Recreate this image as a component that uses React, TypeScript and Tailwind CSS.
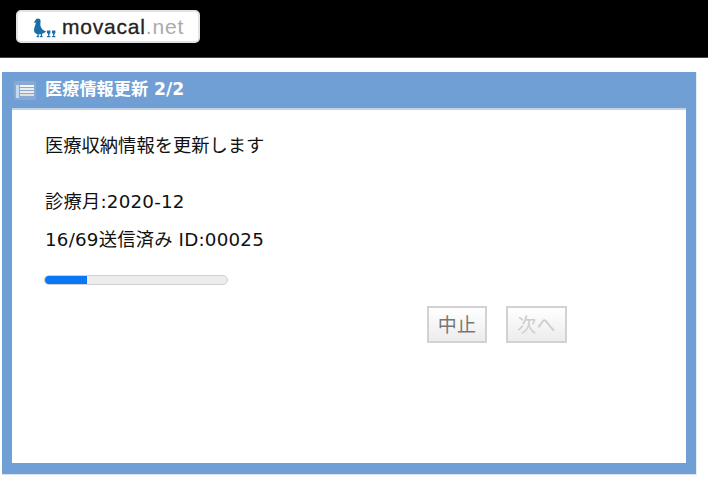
function DuckLogo() {
  return (
    <svg width="26" height="22" viewBox="0 0 26 22" className="shrink-0">
      <g fill="#1b6ea8">
        <circle cx="6" cy="5" r="2.6" />
        <path d="M4.4 3.6 L1.6 6.4 L5 6.6 Z" />
        <path d="M3.8 6.5 C3.8 9 2 11 2 14 C2 17.4 5 18.6 8.4 18.2 C11 17.8 13 16.8 14.4 15.6 C12.4 15 10.4 13.6 9.4 12 C8.4 10.4 8.2 8.4 8.4 6 Z" />
        <rect x="5.4" y="18" width="1.3" height="2.4" />
        <rect x="8.8" y="18" width="1.3" height="2.4" />
        <rect x="4.6" y="20" width="2.6" height="1.2" />
        <rect x="8" y="20" width="2.6" height="1.2" />
        <path d="M15 14.4 h3.4 v2.6 l-1 1 v1.8 h-1.4 v-1.8 l-1 -1 Z" />
        <path d="M20 14.4 h3.4 v2.6 l-1 1 v1.8 h-1.4 v-1.8 l-1 -1 Z" />
        <rect x="15" y="20" width="3.4" height="1.2" />
        <rect x="20" y="20" width="3.4" height="1.2" />
      </g>
    </svg>
  );
}

function TableIcon() {
  return (
    <div className="flex h-[19px] w-[22px] gap-[1px] rounded-[2px] bg-[#88a9d4] px-[2px] pt-[4px] pb-[2px]">
      <div className="w-[3px] bg-[#c4daf3]" />
      <div className="flex flex-1 flex-col gap-[1px]">
        <div className="h-[2px] bg-[#f6f6f6]" />
        <div className="h-[2px] bg-[#ececec]" />
        <div className="h-[2px] bg-[#ececec]" />
        <div className="h-[2px] bg-[#e0e0e0]" />
      </div>
    </div>
  );
}

export default function App() {
  return (
    <div className="h-[482px] w-[708px] overflow-hidden bg-white font-['DejaVu_Sans','Noto_Sans_CJK_JP',sans-serif] text-[#111]">
      <header className="flex h-[58px] items-start border-b border-[#444] bg-black pt-[10px] pl-[16px]">
        <div className="flex h-[33px] w-[184px] items-center gap-[4px] rounded-[5px] border-2 border-[#e2e2e2] bg-white pl-[14px]">
          <DuckLogo />
          <span className="font-['Liberation_Sans',sans-serif] text-[21px] leading-none font-medium tracking-[0.8px] text-[#222] [-webkit-text-stroke:0.3px_#222]">
            movacal<span className="text-[#aaa] [-webkit-text-stroke:0]">.net</span>
          </span>
        </div>
      </header>

      <main className="mt-[14px] ml-[2px] flex h-[403px] w-[695px] flex-col border-r border-b border-r-[#e6eef7] border-b-[#d5e3f3] bg-[#6f9fd5] px-[10px] pb-[11px]">
        <div className="flex h-[36px] shrink-0 items-center gap-[9px] pl-[2px]">
          <TableIcon />
          <h1 className="text-[17.2px] font-bold text-white">医療情報更新 2/2</h1>
        </div>
        <div className="flex flex-1 flex-col border-t-2 border-[#c3d3e5] bg-white px-[32px] pt-[24px] text-[18.3px] leading-[24px] tracking-[0.2px]">
          <p className="pl-[1px] tracking-normal">医療収納情報を更新します</p>
          <p className="mt-[32px] pl-[1px]">診療月:2020-12</p>
          <p className="mt-[14px] pl-[1px]">16/69送信済み ID:00025</p>
          <div className="mt-[23px] h-[10px] w-[184px] overflow-hidden rounded-full border border-[#d0d0d0] bg-[#ececec]">
            <div className="h-full w-[23%] bg-[#0a78f5]" />
          </div>
          <div className="mt-[21px] flex gap-[19px] pl-[383px]">
            <button className="h-[37px] w-[60px] border-2 border-[#d2d2d2] bg-linear-to-b from-white to-[#ececec] text-[19px] text-[#777]">
              中止
            </button>
            <button disabled className="h-[37px] w-[61px] border-2 border-[#d2d2d2] bg-linear-to-b from-white to-[#ececec] text-[19px] text-[#cdcdcd]">
              次へ
            </button>
          </div>
        </div>
      </main>
    </div>
  );
}
